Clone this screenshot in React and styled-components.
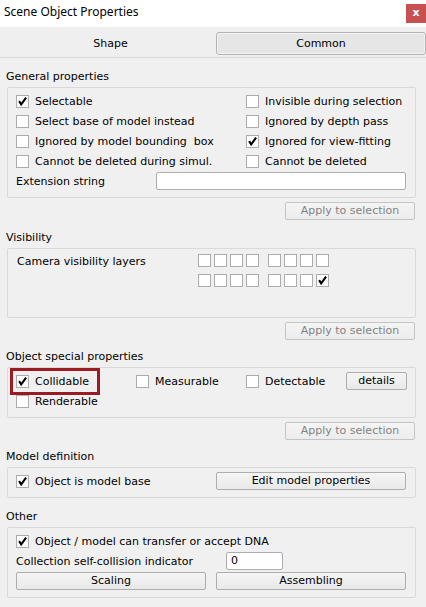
import React from "react";
import styled, { createGlobalStyle } from "styled-components";

const Global = createGlobalStyle`
  html, body { margin: 0; padding: 0; background: #f0f0f0; }
  * { box-sizing: border-box; }
`;

const Window = styled.div`
  width: 426px;
  height: 607px;
  background: #f0f0f0;
  font-family: "DejaVu Sans", Verdana, sans-serif;
  font-size: 11px;
  color: #000;
  overflow: hidden;
  display: flex;
  flex-direction: column;
`;

const TitleBar = styled.div`
  height: 27px;
  background: #ffffff;
  display: flex;
  align-items: flex-start;
  justify-content: space-between;
`;

const Title = styled.div`
  font-family: "Noto Sans", "Open Sans", sans-serif;
  font-size: 12px;
  line-height: 24px;
  padding-left: 4px;
`;

const CloseButton = styled.div`
  margin-top: 4px;
  width: 20px;
  height: 19px;
  background: #c75050;
  color: #fff;
  font-weight: bold;
  font-size: 11px;
  line-height: 18px;
  text-align: center;
`;

const TabBar = styled.div`
  height: 31px;
  padding: 5px 0 0 5px;
  display: grid;
  grid-template-columns: 211px 210px;
  border-bottom: 1px solid #d9d9d9;
  background: #efefef;
`;

const Tab = styled.div`
  height: 23px;
  line-height: 22px;
  text-align: center;
  border: 1px solid ${(p) => (p.$active ? "#b4b4b4" : "transparent")};
  border-radius: 3px;
  background: ${(p) => (p.$active ? "#e6e6e6" : "transparent")};
  box-shadow: ${(p) => (p.$active ? "inset 0 0 0 1px #f2f2f2" : "none")};
`;

const Content = styled.div`
  display: flex;
  flex-direction: column;
  padding: 0 10px 0 7px;
`;

const SectionLabel = styled.div`
  height: 21px;
  padding-top: 1px;
  line-height: 20px;
  margin-top: ${(p) => p.$top}px;
  margin-left: -1px;
`;

const GroupBox = styled.div`
  position: relative;
  height: ${(p) => p.$h}px;
  border: 1px solid #d9d9d9;
  border-radius: 2px;
  padding: 3px 9px 0 8px;
`;

const Grid = styled.div`
  display: grid;
  grid-template-columns: ${(p) => p.$cols};
  grid-auto-rows: 20px;
  align-items: center;
`;

const Row = styled.div`
  height: 20px;
  display: flex;
  align-items: center;
`;

const Item = styled.label`
  position: relative;
  display: flex;
  align-items: center;
  gap: 6px;
  white-space: nowrap;
  height: 20px;
`;

const Box = styled.span`
  flex: none;
  width: 13px;
  height: 13px;
  border: 1px solid #acacac;
  background: #ffffff;
  display: flex;
`;

const Highlight = styled.span`
  position: absolute;
  left: -6px;
  top: -3px;
  width: 90px;
  height: 27px;
  border: 3px solid #9c1b21;
  pointer-events: none;
`;

const FieldLabel = styled.span`
  width: ${(p) => p.$w}px;
  flex: none;
  white-space: nowrap;
`;

const TextInput = styled.div`
  width: ${(p) => p.$w}px;
  height: 18px;
  border: 1px solid #abadb3;
  border-radius: 2px;
  background: #fff;
  padding-left: 4px;
  line-height: 16px;
`;

const Button = styled.div`
  width: ${(p) => p.$w}px;
  height: 18px;
  border: 1px solid ${(p) => (p.$disabled ? "#c4c4c4" : "#adadad")};
  border-radius: 2px;
  background: ${(p) =>
    p.$disabled
      ? "linear-gradient(#f4f4f4, #ececec)"
      : "linear-gradient(#f5f5f5, #e9e9e9)"};
  color: ${(p) => (p.$disabled ? "#838383" : "#000")};
  text-align: center;
  line-height: 16px;
  white-space: nowrap;
`;

const ApplyRow = styled.div`
  display: flex;
  justify-content: flex-end;
  padding-right: 1px;
  margin-top: 4px;
`;

const VisLayout = styled.div`
  display: flex;
  padding-top: 2px;
  padding-left: 1px;
`;

const VisLabel = styled.div`
  width: 181px;
  line-height: 16px;
`;

const Layers = styled.div`
  display: flex;
  flex-direction: column;
  gap: 7px;
`;

const LayerRow = styled.div`
  display: flex;
  gap: 9px;
`;

const LayerGroup = styled.div`
  display: flex;
  gap: 3px;
`;

const ButtonPair = styled.div`
  display: flex;
  gap: 10px;
  height: 20px;
  align-items: center;
`;

const Check = () => (
  <svg width="11" height="11" viewBox="0 0 11 11">
    <path d="M2.1 5.1 L4.2 8.4 L9.1 1.7" fill="none" stroke="#000" strokeWidth="2.1" />
  </svg>
);

const CheckBox = ({ checked }) => <Box>{checked ? <Check /> : null}</Box>;

const CB = ({ checked, children, highlight }) => (
  <Item>
    <CheckBox checked={checked} />
    <span>{children}</span>
    {highlight ? <Highlight /> : null}
  </Item>
);

const LayerSet = ({ checkedIndex = -1 }) => (
  <LayerGroup>
    {[0, 1, 2, 3].map((i) => (
      <CheckBox key={i} checked={i === checkedIndex} />
    ))}
  </LayerGroup>
);

export default function App() {
  return (
    <Window>
      <Global />
      <TitleBar>
        <Title>Scene Object Properties</Title>
        <CloseButton>x</CloseButton>
      </TitleBar>
      <TabBar>
        <Tab>Shape</Tab>
        <Tab $active>Common</Tab>
      </TabBar>
      <Content>
        <SectionLabel $top={8}>General properties</SectionLabel>
        <GroupBox $h={111}>
          <Grid $cols="230px 1fr">
            <CB checked>Selectable</CB>
            <CB>Invisible during selection</CB>
            <CB>Select base of model instead</CB>
            <CB>Ignored by depth pass</CB>
            <CB>Ignored by model bounding&nbsp; box</CB>
            <CB checked>Ignored for view-fitting</CB>
            <CB>Cannot be deleted during simul.</CB>
            <CB>Cannot be deleted</CB>
          </Grid>
          <Row>
            <FieldLabel $w={140}>Extension string</FieldLabel>
            <TextInput $w={251} />
          </Row>
        </GroupBox>
        <ApplyRow>
          <Button $w={130} $disabled>Apply to selection</Button>
        </ApplyRow>

        <SectionLabel $top={7}>Visibility</SectionLabel>
        <GroupBox $h={70}>
          <VisLayout>
            <VisLabel>Camera visibility layers</VisLabel>
            <Layers>
              <LayerRow>
                <LayerSet />
                <LayerSet />
              </LayerRow>
              <LayerRow>
                <LayerSet />
                <LayerSet checkedIndex={3} />
              </LayerRow>
            </Layers>
          </VisLayout>
        </GroupBox>
        <ApplyRow>
          <Button $w={130} $disabled>Apply to selection</Button>
        </ApplyRow>

        <SectionLabel $top={6}>Object special properties</SectionLabel>
        <GroupBox $h={51}>
          <Grid $cols="120px 110px 100px 61px">
            <CB checked highlight>Collidable</CB>
            <CB>Measurable</CB>
            <CB>Detectable</CB>
            <Button $w={61}>details</Button>
            <CB>Renderable</CB>
          </Grid>
        </GroupBox>
        <ApplyRow>
          <Button $w={130} $disabled>Apply to selection</Button>
        </ApplyRow>

        <SectionLabel $top={6}>Model definition</SectionLabel>
        <GroupBox $h={31}>
          <Grid $cols="200px 190px">
            <CB checked>Object is model base</CB>
            <Button $w={190}>Edit model properties</Button>
          </Grid>
        </GroupBox>

        <SectionLabel $top={8}>Other</SectionLabel>
        <GroupBox $h={71}>
          <Row>
            <CB checked>Object / model can transfer or accept DNA</CB>
          </Row>
          <Row>
            <FieldLabel $w={210}>Collection self-collision indicator</FieldLabel>
            <TextInput $w={57}>0</TextInput>
          </Row>
          <ButtonPair>
            <Button $w={190}>Scaling</Button>
            <Button $w={190}>Assembling</Button>
          </ButtonPair>
        </GroupBox>
      </Content>
    </Window>
  );
}
